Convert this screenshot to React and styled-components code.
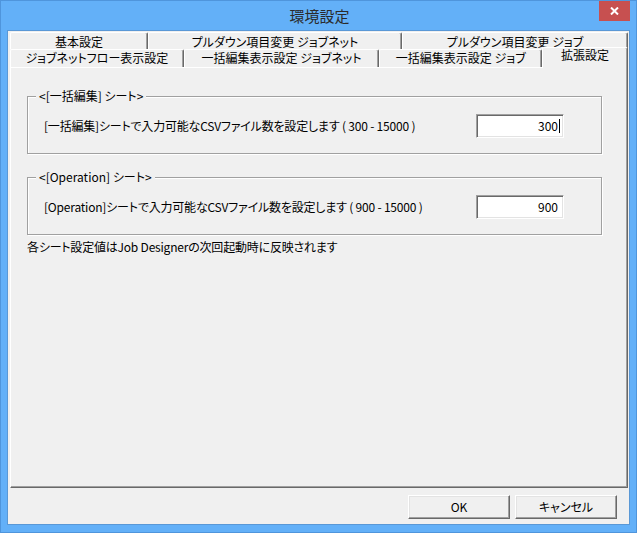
import React from 'react';
import styled, { createGlobalStyle } from 'styled-components';

const GlobalStyle = createGlobalStyle`
  html, body {
    margin: 0;
    padding: 0;
    background: #ffffff;
  }
  body {
    font-family: "Noto Sans CJK JP", "Noto Sans", sans-serif;
    font-feature-settings: "palt";
    color: #000;
  }
`;

const Window = styled.div`
  width: 637px;
  height: 533px;
  box-sizing: border-box;
  background: #63b0f8;
  border: 1px solid #4f95dc;
  padding: 0 6px 7px 6px;
  display: flex;
  flex-direction: column;
`;

const TitleBar = styled.div`
  height: 29px;
  display: grid;
  grid-template-columns: 1fr auto 1fr;
  align-items: start;
`;

const Title = styled.div`
  grid-column: 2;
  font-size: 15px;
  line-height: 29px;
  color: #2b2b2b;
  padding-left: 2px;
  font-feature-settings: normal;
`;

const CloseButton = styled.div`
  grid-column: 3;
  justify-self: end;
  width: 31px;
  height: 20px;
  background: #c75050;
  display: flex;
  align-items: center;
  justify-content: center;
`;

const Client = styled.div`
  flex: 1;
  background: #f0f0f0;
  border: 1px solid #5a98d6;
  display: flex;
  flex-direction: column;
  font-size: 12px;
`;

const Tabs = styled.div`
  margin: 1px 1px 0 2px;
  display: flex;
  flex-direction: column;
`;

const TabRow = styled.div`
  display: flex;
  height: ${p => p.$h}px;
  align-items: flex-start;
`;

const Tab = styled.div`
  box-sizing: border-box;
  width: ${p => p.$w}px;
  height: ${p => (p.$active ? p.$h + 3 : p.$h)}px;
  margin-top: ${p => (p.$active ? -2 : 0)}px;
  padding-top: ${p => p.$pt}px;
  background: #f0f0f0;
  border-top: 1px solid #ffffff;
  border-left: 1px solid #ffffff;
  border-right: 1px solid #696969;
  box-shadow: inset -1px 0 #a0a0a0;
  border-radius: 2px 2px 0 0;
  text-align: center;
  line-height: ${p => p.$lh || 14}px;
  white-space: nowrap;
  position: relative;
  z-index: ${p => (p.$active ? 2 : 0)};
`;

const Panel = styled.div`
  flex: 1;
  margin: 0 1px 0 2px;
  box-sizing: border-box;
  background: #f0f0f0;
  border-top: 1px solid #ffffff;
  border-left: 1px solid #ffffff;
  border-right: 1px solid #696969;
  border-bottom: 1px solid #696969;
  box-shadow: inset -1px -1px #a0a0a0;
  padding: 21px 25px 0 16px;
  display: flex;
  flex-direction: column;
  position: relative;
  z-index: 1;
`;

const GroupBox = styled.fieldset`
  margin: 0 0 ${p => p.$mb || 0}px 0;
  padding: 11px 37px 15px 16px;
  min-inline-size: 0;
  border: 1px solid #a0a0a0;
  box-shadow: inset 1px 1px #ffffff, 1px 1px #ffffff;
  display: flex;
  align-items: center;
  justify-content: space-between;
`;

const Legend = styled.legend`
  margin-left: -8px;
  padding: 0 3px;
  line-height: 14px;
  background: #f0f0f0;
  position: relative;
`;

const Label = styled.span`
  line-height: 14px;
  white-space: nowrap;
  letter-spacing: -0.2px;
`;

const TextBox = styled.div`
  box-sizing: border-box;
  width: 88px;
  height: 24px;
  background: #ffffff;
  border-top: 1px solid #a0a0a0;
  border-left: 1px solid #a0a0a0;
  border-right: 1px solid #ffffff;
  border-bottom: 1px solid #ffffff;
  box-shadow: inset 1px 1px #696969, inset -1px -1px #e3e3e3;
  display: flex;
  align-items: center;
  justify-content: flex-end;
  padding-right: 5px;
  line-height: 14px;
`;

const Caret = styled.span`
  display: inline-block;
  width: 1px;
  height: 14px;
  margin-left: 1px;
  margin-right: -2px;
  background: #000;
`;

const Note = styled.div`
  margin-top: 5px;
  line-height: 14px;
  white-space: nowrap;
  letter-spacing: -0.2px;
`;

const ButtonBar = styled.div`
  height: 36px;
  box-sizing: border-box;
  padding: 7px 12px 0 0;
  display: flex;
  justify-content: flex-end;
  align-items: flex-start;
  gap: 5px;
`;

const Button = styled.div`
  box-sizing: border-box;
  width: 102px;
  height: 24px;
  background: #f0f0f0;
  border-top: 1px solid #ffffff;
  border-left: 1px solid #ffffff;
  border-right: 1px solid #696969;
  border-bottom: 1px solid #696969;
  box-shadow: inset -1px -1px #a0a0a0, inset 1px 1px #e3e3e3;
  display: flex;
  align-items: center;
  justify-content: center;
  line-height: 14px;
`;

const backTabs = [
  { label: '基本設定', w: 138 },
  { label: 'プルダウン項目変更 ジョブネット', w: 254 },
  { label: 'プルダウン項目変更 ジョブ', w: 226 },
];

const frontTabs = [
  { label: 'ジョブネットフロー表示設定', w: 174 },
  { label: '一括編集表示設定 ジョブネット', w: 196 },
  { label: '一括編集表示設定 ジョブ', w: 163 },
  { label: '拡張設定', w: 86, active: true },
];

const CloseIcon = () => (
  <svg width="9" height="8" viewBox="0 0 9 8">
    <path d="M1 0.5 L8 7.5 M8 0.5 L1 7.5" stroke="#fff" strokeWidth="2" />
  </svg>
);

export default function App() {
  return (
    <>
      <GlobalStyle />
      <Window>
        <TitleBar>
          <Title>環境設定</Title>
          <CloseButton><CloseIcon /></CloseButton>
        </TitleBar>
        <Client>
          <Tabs>
            <TabRow $h={17}>
              {backTabs.map(t => (
                <Tab key={t.label} $w={t.w} $h={17} $pt={3} $lh={12}>{t.label}</Tab>
              ))}
            </TabRow>
            <TabRow $h={18}>
              {frontTabs.map(t => (
                <Tab key={t.label} $w={t.w} $h={18} $pt={t.active ? 0 : 1} $active={t.active}>
                  {t.label}
                </Tab>
              ))}
            </TabRow>
          </Tabs>
          <Panel>
            <GroupBox $mb={16}>
              <Legend>&lt;[一括編集] シート&gt;</Legend>
              <Label>[一括編集]シートで入力可能なCSVファイル数を設定します ( 300 - 15000 )</Label>
              <TextBox>300<Caret /></TextBox>
            </GroupBox>
            <GroupBox>
              <Legend>&lt;[Operation] シート&gt;</Legend>
              <Label>[Operation]シートで入力可能なCSVファイル数を設定します ( 900 - 15000 )</Label>
              <TextBox>900</TextBox>
            </GroupBox>
            <Note>各シート設定値はJob Designerの次回起動時に反映されます</Note>
          </Panel>
          <ButtonBar>
            <Button>OK</Button>
            <Button>キャンセル</Button>
          </ButtonBar>
        </Client>
      </Window>
    </>
  );
}
